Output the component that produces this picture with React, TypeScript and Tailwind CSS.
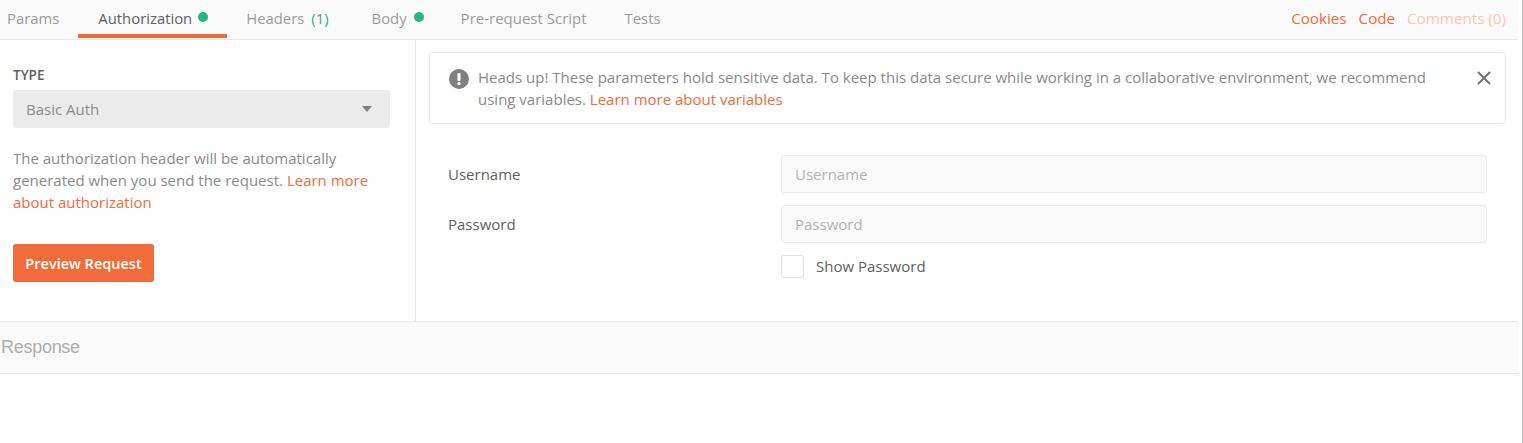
import { X } from "lucide-react";

const App = () => {
  return (
    <div className="h-[443px] w-[1523px] flex overflow-hidden bg-white font-['Open_Sans',sans-serif] text-[15px] text-[#8a8a8a]">
      <div className="w-[1518px] flex flex-col">
        {/* Tabs */}
        <div className="h-10 flex justify-between bg-[#fafafa] border-b border-[#e8e8e8]">
          <div className="flex text-[14.85px] text-[#9a9a9a]">
            <div className="h-[39px] pl-[7px] pr-[19px] pb-[3px] flex items-center">Params</div>
            <div className="h-[38px] pl-5 pr-[19px] flex items-center gap-[6px] text-[#606060] border-b-[4px] border-[#f26b3a] pt-[3px]">
              Authorization
              <span className="w-[10px] h-[10px] rounded-full bg-[#26b47f] mb-[3px]"></span>
            </div>
            <div className="h-[39px] pl-[19px] pr-[23px] pb-[3px] flex items-center gap-[7px]">
              Headers <span className="text-[#26b47f]">(1)</span>
            </div>
            <div className="h-[39px] pl-5 pr-[17px] pb-[3px] flex items-center gap-[7px]">
              Body
              <span className="w-[10px] h-[10px] rounded-full bg-[#26b47f] mb-[3px]"></span>
            </div>
            <div className="h-[39px] pl-5 pr-5 pb-[3px] flex items-center text-[15px]">Pre-request Script</div>
            <div className="h-[39px] pl-[18px] pb-[3px] flex items-center">Tests</div>
          </div>
          <div className="flex items-center gap-3 pr-3 pb-[3px] text-[15.2px] text-[#f26b3a]">
            <span>Cookies</span>
            <span>Code</span>
            <span className="text-[#fbc8b5]">Comments (0)</span>
          </div>
        </div>

        <div className="h-[281px] flex border-b border-[#e8e8e8] box-content">
          {/* Auth type pane */}
          <div className="w-[416px] border-r border-[#e8e8e8] px-[13px] pt-[26px]">
            <div className="text-[13.5px] leading-[18px] font-semibold text-[#606060]">TYPE</div>
            <div className="mt-[6px] h-[38px] w-[377px] rounded-[3px] bg-[#ebebeb] pl-[13px] pr-[18px] flex items-center justify-between">
              Basic Auth
              <span className="w-0 h-0 border-x-[5px] border-x-transparent border-t-[6px] border-t-[#808080]"></span>
            </div>
            <p className="mt-[19px] leading-[22px] w-[377px]">
              The authorization header will be automatically generated when you send the request.{" "}
              <span className="text-[#f26b3a]">Learn more about authorization</span>
            </p>
            <button className="mt-[31px] h-[38px] w-[141px] pt-px rounded-[3px] bg-[#f26b3a] text-white font-semibold text-[14.5px] flex items-center justify-center">
              Preview Request
            </button>
          </div>

          {/* Basic auth form */}
          <div className="flex-1 pt-3 pl-[13px] pr-3">
            <div className="h-[72px] border border-[#e8e8e8] rounded-[3px] flex pl-[19px] pr-[10px] pt-[2px]">
              <svg className="w-5 h-5 mt-[14px] shrink-0" viewBox="0 0 20 20">
                <circle cx="10" cy="10" r="10" fill="#808080" />
                <rect x="8.5" y="4" width="3" height="8" rx="1" fill="#fff" />
                <circle cx="10" cy="14.6" r="1.7" fill="#fff" />
              </svg>
              <p className="ml-[9px] w-[970px] leading-[22px] pt-[11px]">
                Heads up! These parameters hold sensitive data. To keep this data secure while working in a collaborative environment, we recommend using variables.{" "}
                <span className="text-[#f26b3a]">Learn more about variables</span>
              </p>
              <X className="ml-auto mt-[12px] w-[22px] h-[22px] text-[#707070]" strokeWidth={2} />
            </div>
            <div className="mt-[31px] pl-[19px] pr-[19px] flex flex-col gap-3">
              <div className="flex items-center">
                <label className="w-[333px] text-[#606060]">Username</label>
                <input
                  className="flex-1 h-[38px] rounded-[3px] border border-[#ebebeb] bg-[#fafafa] px-[13px] placeholder:text-[#b3b3b3]"
                  placeholder="Username"
                  readOnly
                />
              </div>
              <div className="flex items-center">
                <label className="w-[333px] text-[#606060]">Password</label>
                <input
                  className="flex-1 h-[38px] rounded-[3px] border border-[#ebebeb] bg-[#fafafa] px-[13px] placeholder:text-[#b3b3b3]"
                  placeholder="Password"
                  readOnly
                />
              </div>
            </div>
            <div className="mt-[12px] ml-[352px] flex items-center gap-3 text-[#606060]">
              <span className="w-[23px] h-[23px] rounded-[3px] border border-[#e0e0e0] bg-white"></span>
              Show Password
            </div>
          </div>
        </div>

        {/* Response */}
        <div className="h-[52px] bg-[#fafafa] border-b border-[#e8e8e8] pl-px flex items-center font-['Liberation_Sans',sans-serif] text-[18px] tracking-[-0.28px] text-[#adadad]">
          Response
        </div>
      </div>
      <div className="ml-auto w-px bg-[#c4c4c4]"></div>
    </div>
  );
};

export default App;
